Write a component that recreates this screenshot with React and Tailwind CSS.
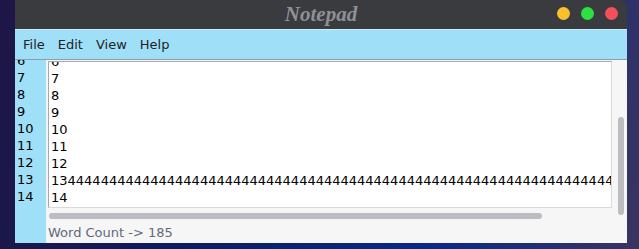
import React from 'react';

const lines = Array.from({ length: 14 }, (_, i) =>
  i === 12 ? '13' + '4'.repeat(90) : String(i + 1)
);

const TrafficLights = () => (
  <div className="absolute right-[9px] top-[7px] flex gap-[11px]">
    <span className="block w-[13px] h-[13px] rounded-full bg-[#fbbf2e]" />
    <span className="block w-[13px] h-[13px] rounded-full bg-[#2ee042]" />
    <span className="block w-[13px] h-[13px] rounded-full bg-[#f2505a]" />
  </div>
);

const App = () => {
  return (
    <div className="w-[639px] h-[249px] overflow-hidden bg-[linear-gradient(100deg,#1f1646_0%,#0c1c5c_30%,#0a2a86_70%,#3a3460_100%)]">
      <div className="ml-[15px] w-[612px] h-[243px] flex flex-col rounded-tr-[8px] overflow-hidden font-['DejaVu_Sans',sans-serif]">
        {/* title bar */}
        <div className="relative h-[29px] bg-[#3a3b3f] flex items-center justify-center">
          <span className="font-['Liberation_Serif',serif] italic font-bold text-[21px] leading-none text-[#8e9096]">
            Notepad
          </span>
          <TrafficLights />
        </div>

        {/* menu bar */}
        <div className="h-[31px] bg-[#9fe0f8] border-t border-[#c4eefc] border-b border-b-[#8aa0a8] flex items-center gap-[13px] pl-[8px] text-[13px] text-[#222]">
          <span>File</span>
          <span>Edit</span>
          <span>View</span>
          <span>Help</span>
        </div>

        {/* body */}
        <div className="flex-1 flex min-h-0">
          <div className="w-[31px] bg-[#9fe0f8] overflow-hidden text-[13px] leading-[17px] text-black pl-[2px]">
            <div className="-mt-[93px]">
              {lines.map((_, i) => (
                <div key={i}>{i + 1}</div>
              ))}
            </div>
          </div>

          <div className="relative flex-1 bg-[#f6f6f7] pl-[2px] pt-[1px] flex flex-col">
            <div className="w-[564px] h-[147px] bg-white border border-[#a8a8a8] border-r-[#dadada] border-b-[#dadada] overflow-hidden text-[13px] leading-[17px] text-black pl-[2px] whitespace-nowrap">
              <div className="-mt-[94px]">
                {lines.map((l, i) => (
                  <div key={i}>{l}</div>
                ))}
              </div>
            </div>

            <div className="mt-[5px] ml-[1px] w-[493px] h-[6px] rounded-full bg-[#bcbcc1]" />

            <div className="mt-[5px] text-[13px] leading-[17px] text-[#5d6a7a]">
              Word Count -&gt; 185
            </div>

            <div className="absolute left-[572px] top-[57px] w-[6px] h-[98px] rounded-full bg-[#bcbcc1]" />
          </div>
        </div>
      </div>
    </div>
  );
};

export default App;
